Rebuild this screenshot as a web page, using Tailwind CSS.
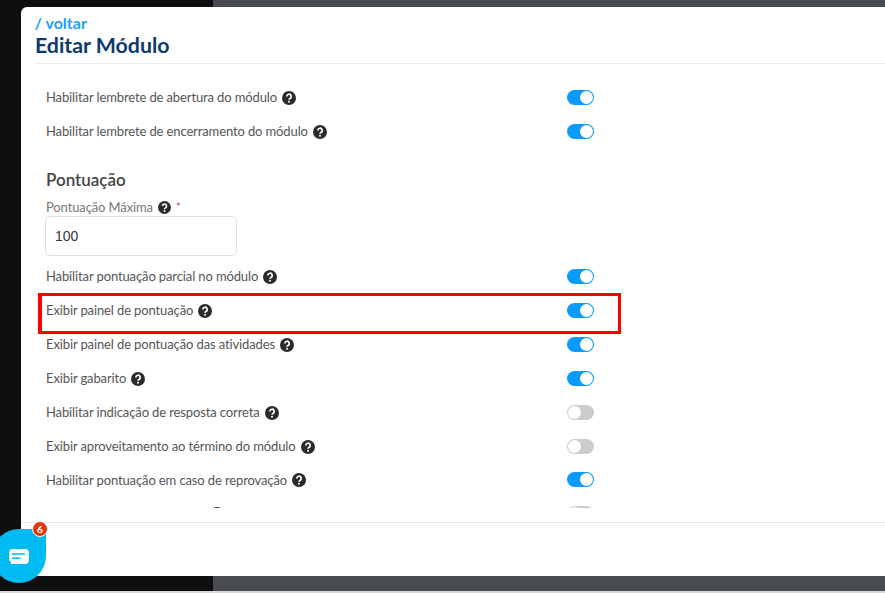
<!DOCTYPE html>
<html><head><meta charset="utf-8"><script src="https://cdn.jsdelivr.net/npm/@tailwindcss/browser@4"></script></head>
<body class="m-0">
<div class="relative w-[885px] h-[593px] overflow-hidden flex flex-col font-['Lato','Noto_Sans',sans-serif] bg-[#0f0f0f]">
  <div class="absolute inset-y-0 left-[213px] right-0 bg-[#484c50]"></div>
  <div class="absolute inset-x-0 bottom-0 h-[2px] bg-[#d8d8d8]"></div>
  <div class="relative mt-[7px] ml-[21px] h-[569px] bg-white rounded-tl-[6px] flex flex-col">
    <div class="h-[57px] ml-[14px] border-b border-[#e9ecef] pt-[6px]">
      <div class="text-[16px] leading-[20px] font-bold text-[#1e9eff] -ml-[0.5px]">/ voltar</div>
      <div class="text-[21.3px] leading-[24px] font-bold text-[#0b3a6e]">Editar Módulo</div>
    </div>
    <div class="h-[444px] overflow-hidden pl-[25px] pt-[17px] text-[13px] tracking-[-0.12px] text-[#555]">
      <div class="flex flex-col">
        <div class="flex items-center justify-between w-[548px] h-[33.8px]"><span class="flex items-center gap-[5px]">Habilitar lembrete de abertura do módulo <svg class="w-[14px] h-[14px]" viewBox="0 0 14 14"><circle cx="7" cy="7" r="7" fill="#2b2b2b"/><path d="M4.8 5.4a2.2 2.2 0 1 1 3.2 2c-.7.4-1 .7-1 1.4" fill="none" stroke="#fff" stroke-width="1.7"/><circle cx="7" cy="10.8" r="1" fill="#fff"/></svg></span><span class="w-[27px] h-[15px] -mt-px rounded-full bg-[#0a9bff] relative"><span class="absolute right-[1px] top-[1px] w-[13px] h-[13px] rounded-full bg-white"></span></span></div>
        <div class="flex items-center justify-between w-[548px] h-[33.8px]"><span class="flex items-center gap-[5px]">Habilitar lembrete de encerramento do módulo <svg class="w-[14px] h-[14px]" viewBox="0 0 14 14"><circle cx="7" cy="7" r="7" fill="#2b2b2b"/><path d="M4.8 5.4a2.2 2.2 0 1 1 3.2 2c-.7.4-1 .7-1 1.4" fill="none" stroke="#fff" stroke-width="1.7"/><circle cx="7" cy="10.8" r="1" fill="#fff"/></svg></span><span class="w-[27px] h-[15px] -mt-px rounded-full bg-[#0a9bff] relative"><span class="absolute right-[1px] top-[1px] w-[13px] h-[13px] rounded-full bg-white"></span></span></div>
      </div>
      <div class="text-[17px] leading-[22px] font-semibold tracking-normal text-[#444] mt-[20.6px]">Pontuação</div>
      <div class="flex items-center gap-[5px] mt-[8px] h-[17px] text-[#777]">Pontuação Máxima <svg class="w-[13px] h-[13px]" viewBox="0 0 14 14"><circle cx="7" cy="7" r="7" fill="#2b2b2b"/><path d="M4.8 5.4a2.2 2.2 0 1 1 3.2 2c-.7.4-1 .7-1 1.4" fill="none" stroke="#fff" stroke-width="1.7"/><circle cx="7" cy="10.8" r="1" fill="#fff"/></svg><span class="text-[#e8344e] text-[11px]">*</span></div>
      <div class="w-[192px] h-[40px] -ml-px border border-[#dcdfe3] rounded-[5px] flex items-center pl-[9px] text-[14px] tracking-normal text-[#333] font-['Liberation_Sans',sans-serif]">100</div>
      <div class="flex flex-col mt-[4px]">
        <div class="flex items-center justify-between w-[548px] h-[33.9px]"><span class="flex items-center gap-[5px]">Habilitar pontuação parcial no módulo <svg class="w-[14px] h-[14px]" viewBox="0 0 14 14"><circle cx="7" cy="7" r="7" fill="#2b2b2b"/><path d="M4.8 5.4a2.2 2.2 0 1 1 3.2 2c-.7.4-1 .7-1 1.4" fill="none" stroke="#fff" stroke-width="1.7"/><circle cx="7" cy="10.8" r="1" fill="#fff"/></svg></span><span class="w-[27px] h-[15px] -mt-px rounded-full bg-[#0a9bff] relative"><span class="absolute right-[1px] top-[1px] w-[13px] h-[13px] rounded-full bg-white"></span></span></div>
        <div class="flex items-center justify-between w-[548px] h-[33.9px]"><span class="flex items-center gap-[5px]">Exibir painel de pontuação <svg class="w-[14px] h-[14px]" viewBox="0 0 14 14"><circle cx="7" cy="7" r="7" fill="#2b2b2b"/><path d="M4.8 5.4a2.2 2.2 0 1 1 3.2 2c-.7.4-1 .7-1 1.4" fill="none" stroke="#fff" stroke-width="1.7"/><circle cx="7" cy="10.8" r="1" fill="#fff"/></svg></span><span class="w-[27px] h-[15px] -mt-px rounded-full bg-[#0a9bff] relative"><span class="absolute right-[1px] top-[1px] w-[13px] h-[13px] rounded-full bg-white"></span></span></div>
        <div class="flex items-center justify-between w-[548px] h-[33.9px]"><span class="flex items-center gap-[5px]">Exibir painel de pontuação das atividades <svg class="w-[14px] h-[14px]" viewBox="0 0 14 14"><circle cx="7" cy="7" r="7" fill="#2b2b2b"/><path d="M4.8 5.4a2.2 2.2 0 1 1 3.2 2c-.7.4-1 .7-1 1.4" fill="none" stroke="#fff" stroke-width="1.7"/><circle cx="7" cy="10.8" r="1" fill="#fff"/></svg></span><span class="w-[27px] h-[15px] -mt-px rounded-full bg-[#0a9bff] relative"><span class="absolute right-[1px] top-[1px] w-[13px] h-[13px] rounded-full bg-white"></span></span></div>
        <div class="flex items-center justify-between w-[548px] h-[33.9px]"><span class="flex items-center gap-[5px]">Exibir gabarito <svg class="w-[14px] h-[14px]" viewBox="0 0 14 14"><circle cx="7" cy="7" r="7" fill="#2b2b2b"/><path d="M4.8 5.4a2.2 2.2 0 1 1 3.2 2c-.7.4-1 .7-1 1.4" fill="none" stroke="#fff" stroke-width="1.7"/><circle cx="7" cy="10.8" r="1" fill="#fff"/></svg></span><span class="w-[27px] h-[15px] -mt-px rounded-full bg-[#0a9bff] relative"><span class="absolute right-[1px] top-[1px] w-[13px] h-[13px] rounded-full bg-white"></span></span></div>
        <div class="flex items-center justify-between w-[548px] h-[33.9px]"><span class="flex items-center gap-[5px]">Habilitar indicação de resposta correta <svg class="w-[14px] h-[14px]" viewBox="0 0 14 14"><circle cx="7" cy="7" r="7" fill="#2b2b2b"/><path d="M4.8 5.4a2.2 2.2 0 1 1 3.2 2c-.7.4-1 .7-1 1.4" fill="none" stroke="#fff" stroke-width="1.7"/><circle cx="7" cy="10.8" r="1" fill="#fff"/></svg></span><span class="w-[27px] h-[15px] -mt-px rounded-full bg-[#ccc] relative"><span class="absolute left-[1px] top-[1px] w-[13px] h-[13px] rounded-full bg-white"></span></span></div>
        <div class="flex items-center justify-between w-[548px] h-[33.9px]"><span class="flex items-center gap-[5px]">Exibir aproveitamento ao término do módulo <svg class="w-[14px] h-[14px]" viewBox="0 0 14 14"><circle cx="7" cy="7" r="7" fill="#2b2b2b"/><path d="M4.8 5.4a2.2 2.2 0 1 1 3.2 2c-.7.4-1 .7-1 1.4" fill="none" stroke="#fff" stroke-width="1.7"/><circle cx="7" cy="10.8" r="1" fill="#fff"/></svg></span><span class="w-[27px] h-[15px] -mt-px rounded-full bg-[#ccc] relative"><span class="absolute left-[1px] top-[1px] w-[13px] h-[13px] rounded-full bg-white"></span></span></div>
        <div class="flex items-center justify-between w-[548px] h-[33.9px]"><span class="flex items-center gap-[5px]">Habilitar pontuação em caso de reprovação <svg class="w-[14px] h-[14px]" viewBox="0 0 14 14"><circle cx="7" cy="7" r="7" fill="#2b2b2b"/><path d="M4.8 5.4a2.2 2.2 0 1 1 3.2 2c-.7.4-1 .7-1 1.4" fill="none" stroke="#fff" stroke-width="1.7"/><circle cx="7" cy="10.8" r="1" fill="#fff"/></svg></span><span class="w-[27px] h-[15px] -mt-px rounded-full bg-[#0a9bff] relative"><span class="absolute right-[1px] top-[1px] w-[13px] h-[13px] rounded-full bg-white"></span></span></div>
        <div class="flex items-center justify-between w-[548px] h-[33.9px]"><span class="flex items-center gap-[5px]"><span class="invisible">Habilitar pontuação em caso </span> <svg class="w-[14px] h-[14px]" viewBox="0 0 14 14"><circle cx="7" cy="7" r="7" fill="#2b2b2b"/></svg></span><span class="w-[27px] h-[15px] -mt-px rounded-full bg-[#ccc] relative"><span class="absolute left-[1px] top-[1px] w-[13px] h-[13px] rounded-full bg-white"></span></span></div>
      </div>
    </div>
    <div class="mt-[14px] border-t border-[#e9e9e9] flex-1"></div>
  </div>
  <div class="absolute left-[38px] top-[293px] w-[583px] h-[41px] border-[3px] border-l-4 border-[#ff0000]"></div>
  <div class="absolute left-[-8px] top-[529px] w-[54px] h-[54px] rounded-full rounded-tr-none bg-[#00bbf2] flex items-center justify-center">
    <svg class="w-[20px] h-[15px]" viewBox="0 0 21 16"><path d="M4 0h13a4 4 0 0 1 4 4v8a4 4 0 0 1-4 4H1.5L2 13.5A4 4 0 0 1 0 12V4a4 4 0 0 1 4-4z" fill="#fff"/><rect x="3" y="4.5" width="14" height="1.6" fill="#00bbf2"/><rect x="3" y="9" width="9" height="1.6" fill="#00bbf2"/></svg>
  </div>
  <div class="absolute left-[32px] top-[521px] w-[16px] h-[16px] rounded-full bg-[#e03a0c] border border-white text-white text-[10px] font-bold flex items-center justify-center">6</div>
</div>
</body></html>
